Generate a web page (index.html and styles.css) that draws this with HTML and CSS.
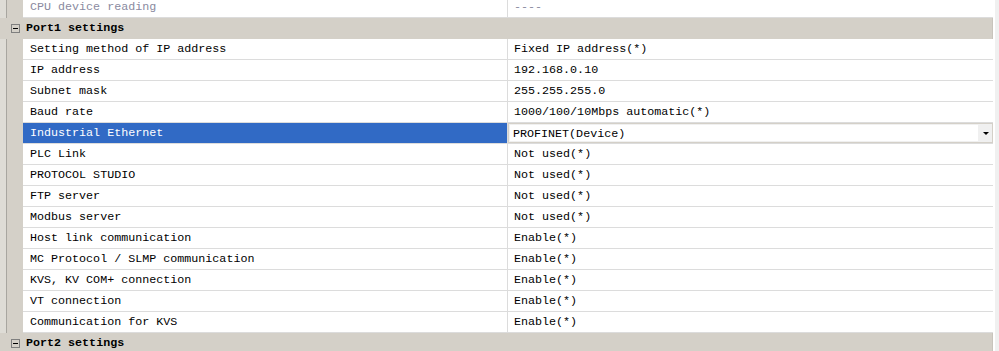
FILE: index.html
```html
<!DOCTYPE html>
<html lang="en">

<head>
    <meta charset="UTF-8">
    <title>Unit settings</title>
    <link rel="stylesheet" href="styles.css">
</head>

<body>
    <div class="sheet">
        <div class="grid">
            <div class="row disabled">
                <div class="gutter"></div>
                <div class="label">CPU device reading</div>
                <div class="value">----</div>
            </div>

            <div class="group">
                <span class="toggle"></span>
                <b>Port1 settings</b>
            </div>

            <div class="row">
                <div class="gutter"></div>
                <div class="label">Setting method of IP address</div>
                <div class="value">Fixed IP address(*)</div>
            </div>
            <div class="row">
                <div class="gutter"></div>
                <div class="label">IP address</div>
                <div class="value">192.168.0.10</div>
            </div>
            <div class="row">
                <div class="gutter"></div>
                <div class="label">Subnet mask</div>
                <div class="value">255.255.255.0</div>
            </div>
            <div class="row">
                <div class="gutter"></div>
                <div class="label">Baud rate</div>
                <div class="value">1000/100/10Mbps automatic(*)</div>
            </div>
            <div class="row selected">
                <div class="gutter"></div>
                <div class="label">Industrial Ethernet</div>
                <div class="value">
                    <div class="combo">
                        <span class="combo-text">PROFINET(Device)</span>
                        <span class="combo-button"></span>
                    </div>
                </div>
            </div>
            <div class="row">
                <div class="gutter"></div>
                <div class="label">PLC Link</div>
                <div class="value">Not used(*)</div>
            </div>
            <div class="row">
                <div class="gutter"></div>
                <div class="label">PROTOCOL STUDIO</div>
                <div class="value">Not used(*)</div>
            </div>
            <div class="row">
                <div class="gutter"></div>
                <div class="label">FTP server</div>
                <div class="value">Not used(*)</div>
            </div>
            <div class="row">
                <div class="gutter"></div>
                <div class="label">Modbus server</div>
                <div class="value">Not used(*)</div>
            </div>
            <div class="row">
                <div class="gutter"></div>
                <div class="label">Host link communication</div>
                <div class="value">Enable(*)</div>
            </div>
            <div class="row">
                <div class="gutter"></div>
                <div class="label">MC Protocol / SLMP communication</div>
                <div class="value">Enable(*)</div>
            </div>
            <div class="row">
                <div class="gutter"></div>
                <div class="label">KVS, KV COM+ connection</div>
                <div class="value">Enable(*)</div>
            </div>
            <div class="row">
                <div class="gutter"></div>
                <div class="label">VT connection</div>
                <div class="value">Enable(*)</div>
            </div>
            <div class="row">
                <div class="gutter"></div>
                <div class="label">Communication for KVS</div>
                <div class="value">Enable(*)</div>
            </div>

            <div class="group">
                <span class="toggle"></span>
                <b>Port2 settings</b>
            </div>
        </div>
        <div class="scroll-edge"></div>
    </div>
</body>

</html>
```

FILE: styles.css
```css
body {
    margin: 0;
    height: 351px;
    overflow: hidden;
    background-color: #ffffff;
    font-family: 'Liberation Mono', 'Courier New', monospace;
    font-size: 11.7px;
    color: #000000;
}

.sheet {
    display: flex;
    height: 100%;
}

.grid {
    width: 993px;
    margin-top: -3px;
    margin-right: 2px;
}

.scroll-edge {
    flex: 1;
    background-color: #f0f0f0;
}

.row {
    display: grid;
    grid-template-columns: 23px 484px 486px;
    height: 21px;
}

.gutter {
    background: linear-gradient(to right, #dedcd6 6px, #a8a6a0 6px 7px, #d4d0c8 7px);
}

.label,
.value {
    line-height: 20px;
    border-bottom: 1px solid #dcdcdc;
    white-space: nowrap;
    overflow: hidden;
}

.label {
    padding-left: 7px;
}

.value {
    padding-left: 6px;
    border-left: 1px solid #dcdcdc;
}

.disabled .label,
.disabled .value {
    color: #8a8aa0;
}

.selected .label {
    background-color: #316ac5;
    color: #ffffff;
}

.selected .value {
    padding-left: 0;
}

.combo {
    display: flex;
    height: 20px;
    box-sizing: border-box;
    border: 1px solid #d4d0c8;
    background-color: #ffffff;
}

.combo-text {
    flex: 1;
    padding-left: 3px;
    line-height: 18px;
    border: 1px solid #f0f0f0;
}

.combo-button {
    width: 13px;
    background-color: #f0f0f0;
    display: flex;
    align-items: center;
    justify-content: center;
}

.combo-button::after {
    content: "";
    border-left: 3px solid transparent;
    border-right: 3px solid transparent;
    border-top: 3px solid #000000;
}

.group {
    display: flex;
    align-items: center;
    height: 21px;
    background-color: #d4d0c8;
    box-sizing: border-box;
    border-right: 1px solid #c8c4bc;
}

.group b {
    margin-left: 6px;
    line-height: 21px;
}

.toggle {
    position: relative;
    width: 9px;
    height: 9px;
    margin-left: 11px;
    box-sizing: border-box;
    border: 1px solid #7f7f7f;
}

.toggle::after {
    content: "";
    position: absolute;
    left: 1px;
    top: 3px;
    width: 5px;
    height: 1px;
    background-color: #000000;
}
```
